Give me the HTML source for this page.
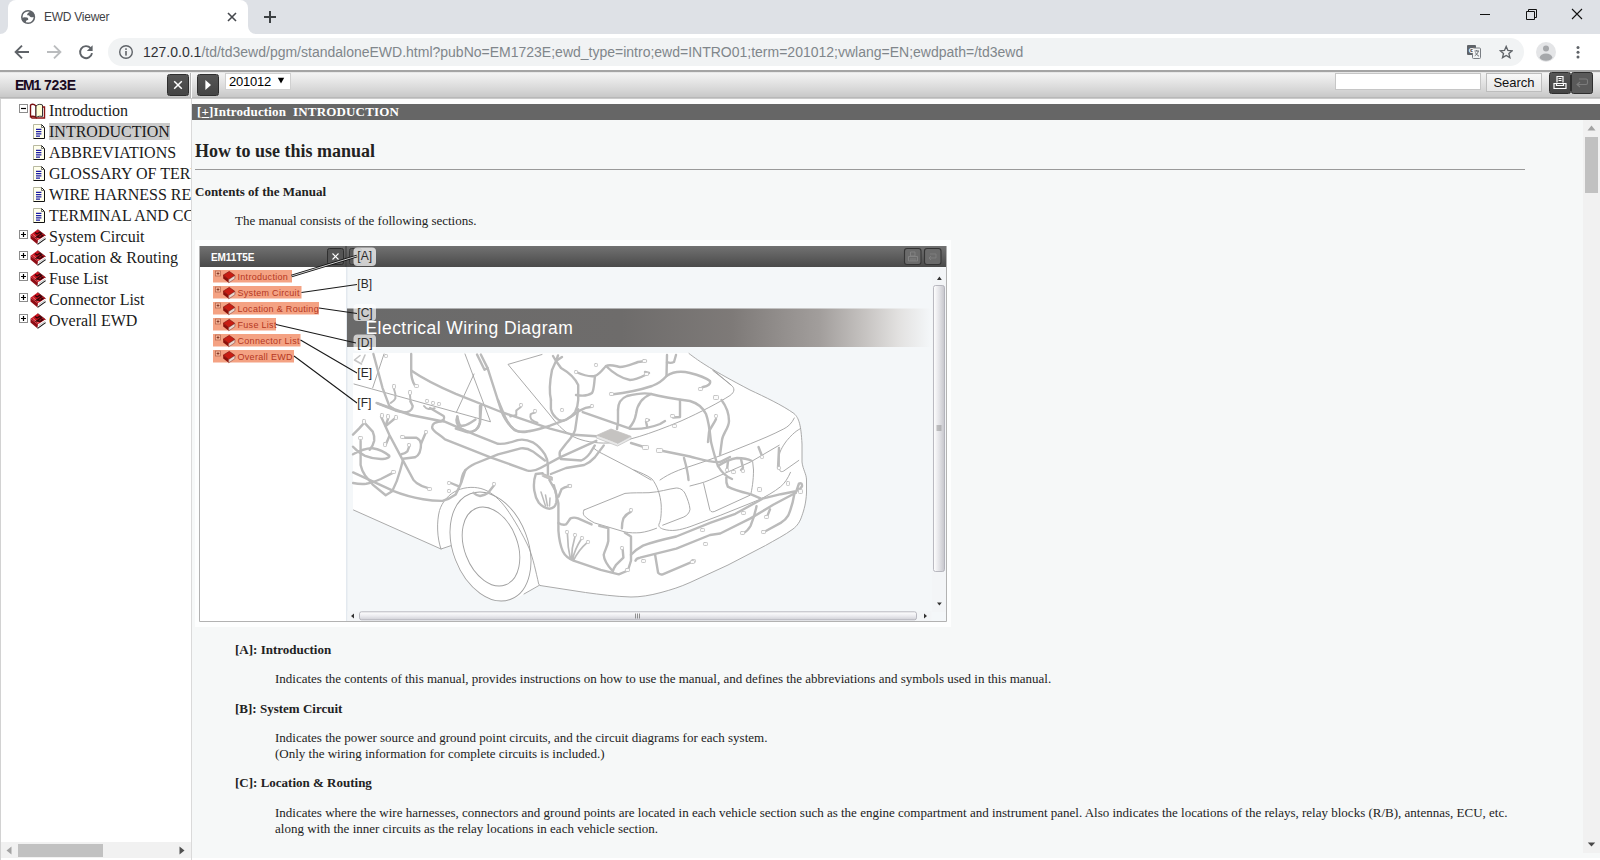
<!DOCTYPE html>
<html>
<head>
<meta charset="utf-8">
<title>EWD Viewer</title>
<style>
html,body{margin:0;padding:0;}
body{width:1600px;height:860px;overflow:hidden;position:relative;background:#fff;font-family:"Liberation Sans",sans-serif;}
.abs{position:absolute;}
/* ---------- browser chrome ---------- */
#tabstrip{left:0;top:0;width:1600px;height:34px;background:#dee1e6;}
#tab{left:8px;top:0;width:240px;height:34px;background:#fff;border-radius:8px 8px 0 0;}
#tabtitle{left:44px;top:10px;font-size:12px;color:#3f4246;white-space:nowrap;letter-spacing:-0.25px;line-height:15px;}
#navbar{left:0;top:34px;width:1600px;height:36px;background:#fff;}
#urlpill{left:108px;top:38px;width:1416px;height:28px;border-radius:14px;background:#f1f3f4;}
#url{left:143px;top:44px;font-size:14px;color:#80868b;white-space:nowrap;letter-spacing:0;}
#url b{font-weight:normal;color:#303134;}
/* ---------- ewd toolbar ---------- */
#ewdbar{left:0;top:70px;width:1600px;height:29px;background:linear-gradient(#a4a4a4 0,#a4a4a4 2px,#f4f4f4 2.6px,#e6e6e6 11px,#d6d6d6 20px,#c8c8c8 27px,#a8a8a8 28px,#ececec 29px);}
.dbtn{background:linear-gradient(#565656,#444);border:1px solid #2e2e2e;border-radius:2.5px;box-sizing:border-box;}
/* ---------- left tree ---------- */
#left{left:0;top:99px;width:191px;height:761px;background:#fff;overflow:hidden;}
.tr{position:absolute;font-family:"Liberation Serif",serif;font-size:16px;color:#1a1a1a;white-space:nowrap;line-height:21px;height:21px;}
/* ---------- content ---------- */
#content{left:192px;top:99px;width:1408px;height:761px;background:#f6f8f8;overflow:hidden;font-family:"Liberation Serif",serif;color:#222;}
#content .t{position:absolute;white-space:nowrap;font-size:13px;}
</style>
</head>
<body>
<!-- tab strip -->
<div id="tabstrip" class="abs"></div>
<div id="tab" class="abs"></div>
<svg class="abs" style="left:0;top:26px" width="8" height="8" viewBox="0 0 8 8"><path d="M8 0 V8 H0 A8 8 0 0 0 8 0Z" fill="#fff"/></svg>
<svg class="abs" style="left:248px;top:26px" width="8" height="8" viewBox="0 0 8 8"><path d="M0 0 V8 H8 A8 8 0 0 1 0 0Z" fill="#fff"/></svg>
<div id="tabtitle" class="abs">EWD Viewer</div>
<!-- nav bar -->
<div id="navbar" class="abs"></div>
<div id="urlpill" class="abs"></div>
<div id="url" class="abs"><b>127.0.0.1</b>/td/td3ewd/pgm/standaloneEWD.html?pubNo=EM1723E;ewd_type=intro;ewd=INTRO01;term=201012;vwlang=EN;ewdpath=/td3ewd</div>

<!-- favicon globe -->
<svg class="abs" style="left:20px;top:9px" width="16" height="16" viewBox="0 0 16 16"><circle cx="8.1" cy="8" r="6.3" fill="#fff" stroke="#5f6368" stroke-width="1.6"/><path d="M7.2 5.2 C7.6 4.2 8.6 3.4 10.5 2.5 L12.9 3.1 L14.3 5.2 L14.5 7.2 C14 8 13.4 8.3 12.7 8.3 C11.8 8.4 11 8.2 10.5 8 C9.8 7.6 9.4 7 9.1 6.6 C8.4 6.3 7.8 6.4 7.2 6.3 Z" fill="#5f6368"/><path d="M2.3 9.1 C3 8.5 3.7 8.3 4.4 8.3 L7.2 8.5 C7.9 8.9 8.2 9.4 8.3 10 C8.3 10.5 8.1 10.9 7.7 11.1 L6.4 11.6 C6 12.2 5.9 12.8 5.8 13.4 L4.4 14 L2.6 12.3 L1.8 10.5 Z" fill="#5f6368"/></svg>
<!-- tab close -->
<svg class="abs" style="left:226px;top:11px" width="12" height="12" viewBox="0 0 12 12"><path d="M2 2 L10 10 M10 2 L2 10" stroke="#45484d" stroke-width="1.6" fill="none"/></svg>
<!-- new tab -->
<svg class="abs" style="left:263px;top:10px" width="14" height="14" viewBox="0 0 14 14"><path d="M7 1 V13 M1 7 H13" stroke="#3c4043" stroke-width="2" fill="none"/></svg>
<!-- window controls -->
<svg class="abs" style="left:1470px;top:4px" width="120" height="22" viewBox="0 0 120 22"><path d="M10 10.5 H20" stroke="#111" stroke-width="1" fill="none"/><path d="M56.5 7.5 H64.5 V15.5 H56.5 Z M58.5 7.5 V5.5 H66.5 V13.5 H64.5" stroke="#111" stroke-width="1" fill="none"/><path d="M102 5 L112 15 M112 5 L102 15" stroke="#111" stroke-width="1.1" fill="none"/></svg>
<!-- back -->
<svg class="abs" style="left:14px;top:44px" width="16" height="16" viewBox="0 0 16 16"><path d="M15 8 H2.5 M8 1.6 L1.6 8 L8 14.4" stroke="#5f6368" stroke-width="1.9" fill="none"/></svg>
<!-- forward -->
<svg class="abs" style="left:46px;top:44px" width="16" height="16" viewBox="0 0 16 16"><path d="M1 8 H13.5 M8 1.6 L14.4 8 L8 14.4" stroke="#babcbe" stroke-width="1.9" fill="none"/></svg>
<!-- reload -->
<svg class="abs" style="left:78px;top:44px" width="16" height="16" viewBox="0 0 16 16"><path d="M12.6 4.2 A6 6 0 1 0 14 9.2" stroke="#5f6368" stroke-width="1.9" fill="none"/><path d="M14.6 1.2 V7 H8.8 Z" fill="#5f6368"/></svg>
<!-- info -->
<svg class="abs" style="left:118px;top:44px" width="16" height="16" viewBox="0 0 16 16"><circle cx="8" cy="8" r="6.3" stroke="#5f6368" stroke-width="1.4" fill="none"/><rect x="7.2" y="7" width="1.6" height="4.6" fill="#5f6368"/><rect x="7.2" y="4.3" width="1.6" height="1.6" fill="#5f6368"/></svg>
<!-- translate -->
<svg class="abs" style="left:1466px;top:44px" width="16" height="16" viewBox="0 0 16 16"><rect x="1" y="1" width="9" height="10" rx="1" fill="#5f6368"/><rect x="6.5" y="4" width="8" height="10.5" rx="1" fill="#f1f3f4" stroke="#7a7e83" stroke-width="1"/><text x="5.4" y="9" font-family="Liberation Sans" font-size="7" font-weight="bold" fill="#fff" text-anchor="middle">G</text><path d="M8.5 7 H13 M10.7 6 V7 M12.3 7 C11.8 9.5 10 11 8.8 11.8 M9.5 8.5 C10 10 11.5 11.5 13 12.2" stroke="#5f6368" stroke-width="0.9" fill="none"/></svg>
<!-- star -->
<svg class="abs" style="left:1498.8px;top:44.6px" width="14.4" height="14.4" viewBox="0 0 16 16"><path d="M8 1.6 L9.9 6 L14.6 6.4 L11 9.5 L12.1 14.1 L8 11.6 L3.9 14.1 L5 9.5 L1.4 6.4 L6.1 6 Z" stroke="#5f6368" stroke-width="1.5" fill="none" stroke-linejoin="miter"/></svg>
<!-- avatar -->
<svg class="abs" style="left:1536px;top:42px" width="20" height="20" viewBox="0 0 20 20"><defs><clipPath id="avc"><circle cx="10" cy="10" r="10"/></clipPath></defs><circle cx="10" cy="10" r="10" fill="#e4e5e7"/><g clip-path="url(#avc)"><circle cx="10" cy="6.6" r="3" fill="#a6a8ab"/><ellipse cx="10" cy="15.2" rx="6.2" ry="3.6" fill="#a6a8ab"/></g></svg>
<!-- menu -->
<svg class="abs" style="left:1574px;top:44px" width="8" height="16" viewBox="0 0 8 16"><circle cx="4" cy="3.4" r="1.5" fill="#5f6368"/><circle cx="4" cy="8.2" r="1.5" fill="#5f6368"/><circle cx="4" cy="13" r="1.5" fill="#5f6368"/></svg>
<!-- ewd toolbar -->
<div id="ewdbar" class="abs"></div>

<div class="abs" style="left:15px;top:77px;font-size:14px;font-weight:bold;color:#1a0a1e;white-space:nowrap;line-height:16px"><span style="letter-spacing:-1.3px">EM1</span><span style="margin-left:4.2px;letter-spacing:-0.25px">723E</span></div>
<div class="abs dbtn" style="left:167px;top:74px;width:22px;height:22px"></div>
<svg class="abs" style="left:173px;top:80px" width="10" height="10" viewBox="0 0 10 10"><path d="M1.2 1.2 L8.8 8.8 M8.8 1.2 L1.2 8.8" stroke="#fff" stroke-width="1.5" fill="none"/></svg>
<div class="abs" style="left:190px;top:73px;width:1px;height:25px;background:#b4b4b4"></div>
<div class="abs" style="left:191px;top:73px;width:1px;height:25px;background:#fbfbfb"></div>
<div class="abs dbtn" style="left:197px;top:74px;width:22px;height:22px"></div>
<svg class="abs" style="left:204px;top:79px" width="8" height="12" viewBox="0 0 8 12"><path d="M1.4 1 L7 6 L1.4 11 Z" fill="#fff"/></svg>
<div class="abs" style="left:225px;top:73px;width:66px;height:17px;background:#fff;border:1px solid #d0d0d0;box-sizing:border-box"></div>
<div class="abs" style="left:229px;top:74px;font-size:13px;color:#000;letter-spacing:-0.25px;line-height:15px;white-space:nowrap">201012</div>
<svg class="abs" style="left:277px;top:77px" width="8" height="7" viewBox="0 0 8 7"><path d="M0.8 0.8 H7.2 L4 6.4 Z" fill="#000"/></svg>
<div class="abs" style="left:1335px;top:73px;width:146px;height:17px;background:#fff;border:1px solid #c6c6c6;box-sizing:border-box"></div>
<div class="abs" style="left:1486px;top:73px;width:56px;height:19px;background:linear-gradient(#f8f8f8,#e6e6e6);border:1px solid #bdbdbd;box-sizing:border-box;font-size:13px;color:#111;text-align:center;line-height:17px">Search</div>
<div class="abs dbtn" style="left:1549px;top:72px;width:22px;height:22px"></div>
<div class="abs dbtn" style="left:1571px;top:72px;width:22px;height:22px;background:#5a5a5a"></div>
<svg class="abs" style="left:1552px;top:75px" width="16" height="16" viewBox="0 0 16 16"><path d="M5 7.5 V1.5 H11 V7.5 M2 8.5 H14 V13.5 H2 Z M4.5 8.5 V10.5 H11.5 V8.5" stroke="#fff" stroke-width="1.2" fill="none"/><path d="M6.5 3.5 H9.5 M6.5 5.5 H9.5" stroke="#fff" stroke-width="1"/></svg>
<svg class="abs" style="left:1574px;top:75px" width="16" height="16" viewBox="0 0 16 16"><path d="M5 4 H12 Q13.5 4 13.5 5.5 V8 Q13.5 9.5 12 9.5 H3 M6 7 L3 9.5 L6 12" stroke="#7c7c7c" stroke-width="1.1" fill="none"/></svg>
<!-- left -->
<svg width="0" height="0" style="position:absolute"><defs>
<g id="i-minus"><rect x="0.5" y="0.5" width="8" height="8" fill="#fff" stroke="#8c8c8c"/><path d="M2 4.5 H7" stroke="#000" stroke-width="1.2"/></g>
<g id="i-plus"><rect x="0.5" y="0.5" width="8" height="8" fill="#fff" stroke="#8c8c8c"/><path d="M2 4.5 H7 M4.5 2 V7" stroke="#000" stroke-width="1.2"/></g>
<g id="i-doc"><path d="M0.5 0.5 H8.5 L11.5 3.5 V14.5 H0.5 Z" fill="#ffffec"/><path d="M0.5 14.5 V0.5 H8.5" fill="none" stroke="#b9b9a0" stroke-width="1"/><path d="M8.5 0.5 L11.5 3.5 V14.5 H0.5" fill="none" stroke="#111" stroke-width="1"/><path d="M8.5 0.5 V3.5 H11.5" fill="none" stroke="#555" stroke-width="0.8"/><path d="M3 5.3 H8.4 M3 7.6 H8.4 M3 9.9 H8.4 M3 12.2 H7" stroke="#1c1ca4" stroke-width="1.25"/></g>
<g id="i-open"><path d="M1.5 2 C3 1 5 1 7 3 V14.5 C5 13 3 13 1.5 13.5 Z" fill="#fff" stroke="#7a1010" stroke-width="1.4"/><path d="M7 3 C9 1 11.5 1 13.5 2 V13.5 C11.5 13 9 13 7 14.5 Z" fill="#ffffd8" stroke="#333" stroke-width="1"/><path d="M13.5 4 H15.5 V15 H3 L1.5 13.5" fill="none" stroke="#8a1414" stroke-width="1.4"/></g>
<g id="i-book"><path d="M0.5 5.7 L7.6 0.4 L15.6 6.6 L8 11.6 Z" fill="#c8121e"/><path d="M0.5 5.7 L8 11.6 L7.6 15.4 L0.5 9.4 Z" fill="#8e0c14"/><path d="M8 11.6 L15.6 6.6 V9.6 L7.6 15.4 Z" fill="#fff"/><path d="M7.6 15.4 L15.6 9.6" stroke="#111" stroke-width="1.1"/><path d="M8.6 12.6 L15.3 8.2" stroke="#999" stroke-width="0.6"/><path d="M2.6 5.2 L9.2 10.6" stroke="#f0b0b0" stroke-width="0.7"/><path d="M5.2 3.6 L7 5 L9.6 3.4 L11.4 4.8 L6.6 8 L10.4 8.4 L12.8 6.8 L11 5.6" fill="none" stroke="#30060a" stroke-width="1.3"/><path d="M7.6 0.4 L15.6 6.6" stroke="#5a060c" stroke-width="0.7"/></g>
</defs></svg><div id="left" class="abs"><div class="abs" style="left:0;top:1px" id="treewrap"><svg class="abs" style="left:19px;top:4px" width="9" height="9" viewBox="0 0 9 9"><use href="#i-minus"/></svg><svg class="abs" style="left:29px;top:3px" width="17" height="16" viewBox="0 0 17 16"><use href="#i-open"/></svg><div class="tr" style="left:49px;top:0px">Introduction</div>
<svg class="abs" style="left:33px;top:24px" width="12" height="15" viewBox="0 0 12 15"><use href="#i-doc"/></svg><div class="abs" style="left:49px;top:24px;width:121px;height:17px;margin-top:-1px;background:#cbcbcb"></div><div class="tr" style="left:49px;top:21px">INTRODUCTION</div>
<svg class="abs" style="left:33px;top:45px" width="12" height="15" viewBox="0 0 12 15"><use href="#i-doc"/></svg><div class="tr" style="left:49px;top:42px">ABBREVIATIONS</div>
<svg class="abs" style="left:33px;top:66px" width="12" height="15" viewBox="0 0 12 15"><use href="#i-doc"/></svg><div class="tr" style="left:49px;top:63px">GLOSSARY OF TERMS AND SYMBOLS</div>
<svg class="abs" style="left:33px;top:87px" width="12" height="15" viewBox="0 0 12 15"><use href="#i-doc"/></svg><div class="tr" style="left:49px;top:84px">WIRE HARNESS REPAIR</div>
<svg class="abs" style="left:33px;top:108px" width="12" height="15" viewBox="0 0 12 15"><use href="#i-doc"/></svg><div class="tr" style="left:49px;top:105px">TERMINAL AND CONNECTOR REPAIR</div>
<svg class="abs" style="left:19px;top:130px" width="9" height="9" viewBox="0 0 9 9"><use href="#i-plus"/></svg><svg class="abs" style="left:30px;top:129px" width="16" height="16" viewBox="0 0 16 16"><use href="#i-book"/></svg><div class="tr" style="left:49px;top:126px">System Circuit</div>
<svg class="abs" style="left:19px;top:151px" width="9" height="9" viewBox="0 0 9 9"><use href="#i-plus"/></svg><svg class="abs" style="left:30px;top:150px" width="16" height="16" viewBox="0 0 16 16"><use href="#i-book"/></svg><div class="tr" style="left:49px;top:147px">Location &amp; Routing</div>
<svg class="abs" style="left:19px;top:172px" width="9" height="9" viewBox="0 0 9 9"><use href="#i-plus"/></svg><svg class="abs" style="left:30px;top:171px" width="16" height="16" viewBox="0 0 16 16"><use href="#i-book"/></svg><div class="tr" style="left:49px;top:168px">Fuse List</div>
<svg class="abs" style="left:19px;top:193px" width="9" height="9" viewBox="0 0 9 9"><use href="#i-plus"/></svg><svg class="abs" style="left:30px;top:192px" width="16" height="16" viewBox="0 0 16 16"><use href="#i-book"/></svg><div class="tr" style="left:49px;top:189px">Connector List</div>
<svg class="abs" style="left:19px;top:214px" width="9" height="9" viewBox="0 0 9 9"><use href="#i-plus"/></svg><svg class="abs" style="left:30px;top:213px" width="16" height="16" viewBox="0 0 16 16"><use href="#i-book"/></svg><div class="tr" style="left:49px;top:210px">Overall EWD</div>
</div><div class="abs" style="left:0;top:743px;width:191px;height:16px;background:#f1f1f1"></div>
<div class="abs" style="left:18px;top:745px;width:85px;height:13px;background:#c1c1c1"></div>
<svg class="abs" style="left:6px;top:747px" width="6" height="9" viewBox="0 0 6 9"><path d="M5.5 0.5 L0.5 4.5 L5.5 8.5 Z" fill="#a3a3a3"/></svg>
<svg class="abs" style="left:179px;top:747px" width="6" height="9" viewBox="0 0 6 9"><path d="M0.5 0.5 L5.5 4.5 L0.5 8.5 Z" fill="#505050"/></svg></div>
<div class="abs" style="left:0;top:99px;width:1px;height:761px;background:#d2d2d2"></div>
<div class="abs" style="left:191px;top:99px;width:1px;height:761px;background:#dadada"></div>
<!-- content -->
<div id="content" class="abs">
<div class="abs" style="left:0;top:0;width:1408px;height:5px;background:#fcfcfc"></div>
<div class="abs" style="left:0;top:5px;width:1408px;height:16px;background:#666"></div>
<div class="t" style="left:5px;top:5px;color:#fff;font-weight:bold;line-height:16px;letter-spacing:0.17px">[<u>+</u>]Introduction&nbsp; INTRODUCTION</div>
<div class="t" style="left:3px;top:42px;font-size:18px;font-weight:bold;line-height:21px">How to use this manual</div>
<div class="abs" style="left:3px;top:70px;width:1330px;height:1px;background:#9a9a9a"></div>
<div class="t" style="left:3px;top:85px;font-weight:bold;line-height:15px">Contents of the Manual</div>
<div class="t" style="left:43px;top:114px;line-height:15px">The manual consists of the following sections.</div>
<div class="t" style="left:43px;top:543px;font-weight:bold;line-height:15px">[A]: Introduction</div>
<div class="t" style="left:83px;top:572px;line-height:15px">Indicates the contents of this manual, provides instructions on how to use the manual, and defines the abbreviations and symbols used in this manual.</div>
<div class="t" style="left:43px;top:602px;font-weight:bold;line-height:15px">[B]: System Circuit</div>
<div class="t" style="left:83px;top:631px;line-height:15px">Indicates the power source and ground point circuits, and the circuit diagrams for each system.</div>
<div class="t" style="left:83px;top:647px;line-height:15px">(Only the wiring information for complete circuits is included.)</div>
<div class="t" style="left:43px;top:676px;font-weight:bold;line-height:15px">[C]: Location &amp; Routing</div>
<div class="t" style="left:83px;top:706px;line-height:15px">Indicates where the wire harnesses, connectors and ground points are located in each vehicle section such as the engine compartment and instrument panel. Also indicates the locations of the relays, relay blocks (R/B), antennas, ECU, etc.</div>
<div class="t" style="left:83px;top:722px;line-height:15px">along with the inner circuits as the relay locations in each vehicle section.</div>
<div class="abs" style="left:1391px;top:21px;width:17px;height:733px;background:#f1f1f1"></div>
<div class="abs" style="left:1393px;top:38px;width:13px;height:56px;background:#c1c1c1"></div>
<svg class="abs" style="left:1395px;top:26px" width="9" height="6" viewBox="0 0 9 6"><path d="M0.5 5.5 L4.5 0.5 L8.5 5.5 Z" fill="#a3a3a3"/></svg>
<svg class="abs" style="left:1395px;top:742.5px" width="9" height="6" viewBox="0 0 9 6"><path d="M0.8 0.4 L4.5 4.6 L8.2 0.4 Z" fill="#484848"/></svg>
<!-- IMG -->
<div class="abs" style="left:3px;top:141px;width:756px;height:387px;background:#fdfefe"></div>
<svg class="abs" style="left:7px;top:146px" width="749" height="378" viewBox="199 245 749 378" font-family="Liberation Sans, sans-serif">
<defs>
<linearGradient id="gtb" x1="0" y1="0" x2="0" y2="1"><stop offset="0" stop-color="#727272"/><stop offset="1" stop-color="#4a4a4a"/></linearGradient>
<linearGradient id="gban" x1="0" y1="0" x2="1" y2="0"><stop offset="0" stop-color="#6a6a6a"/><stop offset="0.47" stop-color="#6e6c6b"/><stop offset="0.66" stop-color="#7e7a78"/><stop offset="0.81" stop-color="#a29e9c"/><stop offset="0.887" stop-color="#c6c3c1"/><stop offset="0.947" stop-color="#e3e2e1"/><stop offset="1" stop-color="#f4f7f9"/></linearGradient>
<linearGradient id="gvs" x1="0" y1="0" x2="1" y2="0"><stop offset="0" stop-color="#ffffff"/><stop offset="0.5" stop-color="#e4e4e8"/><stop offset="1" stop-color="#c6c6cc"/></linearGradient>
<linearGradient id="ghs" x1="0" y1="0" x2="0" y2="1"><stop offset="0" stop-color="#ffffff"/><stop offset="0.5" stop-color="#ececf0"/><stop offset="1" stop-color="#d0d0d6"/></linearGradient>
<g id="mb" transform="scale(1.35)"><path d="M0.5 3.6 L5 0.8 L9.2 3.8 L4.6 6.8 Z" fill="#c81e14" stroke="#7a0c08" stroke-width="0.5"/><path d="M0.5 3.6 L4.6 6.8 V9.3 L0.5 6 Z" fill="#8a100a"/><path d="M4.6 6.8 L9.2 3.8 V6.2 L4.6 9.3 Z" fill="#e8d8d0" stroke="#8a3a30" stroke-width="0.4"/></g>
<g id="mp"><rect x="0.5" y="0.5" width="5" height="5" fill="#f7b79c" stroke="#b86a50" stroke-width="0.8"/><path d="M1.6 3 H4.4 M3 1.6 V4.4" stroke="#7a2a18" stroke-width="0.8"/></g>
</defs>
<!-- frame -->
<rect x="199" y="246" width="748" height="376" fill="#f4f7f9"/><path d="M199.5 246 V621.5 H946.5 V246" fill="none" stroke="#b2b2b2"/>
<rect x="200" y="246" width="746" height="21" fill="url(#gtb)"/>
<rect x="200" y="267" width="146" height="354" fill="#fff"/>
<rect x="346" y="267" width="1.5" height="354" fill="#e3e9ef"/>
<text x="211" y="260.5" font-size="10" font-weight="bold" fill="#fff" letter-spacing="-0.1">EM11T5E</text>
<rect x="327.5" y="248.5" width="16" height="16" rx="2" fill="#555" stroke="#2f2f2f"/>
<path d="M332.5 253.5 L338.5 259.5 M338.5 253.5 L332.5 259.5" stroke="#fff" stroke-width="1.1"/>
<rect x="345.5" y="246" width="1" height="21" fill="#3c3c3c"/>
<rect x="349.5" y="248.5" width="12" height="16" rx="2" fill="#5a5a5a" stroke="#3a3a3a"/>
<rect x="904.5" y="248.5" width="16.5" height="16" rx="2.5" fill="#6b6b6b" stroke="#353535" stroke-width="1.1"/>
<rect x="924.5" y="248.5" width="16.5" height="16" rx="2.5" fill="#6b6b6b" stroke="#353535" stroke-width="1.1"/>
<path d="M910.5 252 h4.5 v4 h-4.5z M908.5 256.5 h9 v4.5 h-9z M911 258 v3 M913 258 v3 M915 258 v3" fill="none" stroke="#848484" stroke-width="0.9"/>
<path d="M930 254 h6 v4 h-7 m2 -2 l-2 2 l2 2" fill="none" stroke="#808080" stroke-width="0.9"/>
<!-- banner -->
<rect x="347" y="308.5" width="584" height="38.5" fill="url(#gban)"/>
<text x="365.5" y="333.5" font-size="17.5" fill="#fff" letter-spacing="0.45">Electrical Wiring Diagram</text>
<!--CARS--><g id="car" fill="none" stroke-linecap="round" stroke-linejoin="round">
<!-- white body -->
<path d="M353 353 H689 C700 362 712 370 750 390 C765 397 782 405 794 413.5 C799 418 801 425 802 444 V462 C803 470 806.5 474 806.5 480 V493 C806 503 804 510 802 515.5 C800 522 797 526 793 529 C785 535 775 540 765.5 545.5 L728 565 L690 582.5 C680 587 672 589.5 661 592.5 C650 595.5 640 597 631 597 C615 596.5 600 594.5 585.5 592.5 L540 585.5 L524 594 C510 603 490 603 478 592 C462 578 452 560 450.8 545.7 L441 549 L353 510 Z" fill="#fff" stroke="none"/>
<!-- thin outlines -->
<g stroke="#a0a0a0" stroke-width="0.9">
<path d="M689 353.5 C700 362 712 370 750 390 C765 397 782 405 794 413.5 C799 418 801 425 802 444 V462 C803 470 806.5 474 806.5 480 V493 C806 503 804 510 802 515.5 C800 522 797 526 793 529 C785 535 775 540 765.5 545.5 L728 565 L690 582.5 C680 587 672 589.5 661 592.5 C650 595.5 640 597 631 597 C615 596.5 600 594.5 585.5 592.5 L540 585.5"/>
<path d="M353.5 510 L441 549 L450.8 545.7"/>
<path d="M441 549 C437 538 436.5 522 439.5 510.5 C442 502 449 494 457 490.5 C466 486.5 476 486.5 484 489.5 C492 492.5 500 500 506 508 C514 519 523 535 529 548 C533 558 536 572 538.7 584 L540 585.5"/>
<ellipse cx="490.5" cy="546.5" rx="37.5" ry="56.5" transform="rotate(-21 490.5 546.5)"/>
<ellipse cx="491" cy="546.5" rx="26.5" ry="41" transform="rotate(-21 491 546.5)"/>
<path d="M524 594 L539 585.5"/>
<path d="M354 384 L490.5 421.8 L465 354"/>
<path d="M456.5 412 L474 374"/>
<path d="M372.7 387.8 L384 354"/>
<path d="M542 354.5 L508 364.4 L550 415 C556 423 563 431 573 436.5 C583 441.5 596 443.5 608 443 C625 442 650 434 681 421 C700 412.5 720 402 730 395.5 C735 392 735 388 731 385 L712.7 370.4"/>
<path d="M794.3 418 C792 423 788 427 783.5 429 C772 435 762 439 750.5 443.7 C730 452 710 460 690 466.4 C680 469.5 670 473 660 480"/>
<path d="M800.4 428.6 C794 432 790 437 786.7 440.7 C782 447 779.5 452 779.2 456 V469 C780 472 782 472 783.7 471 L798.8 460.4"/>
<path d="M779.2 445.2 L750.5 462 L709.7 480 C703 483 697 484 690 486"/>
<path d="M752.7 462 L753.5 470 C753.5 480 752 490 750.5 495 L714.2 511.6 C711.5 512.5 710 511 709.7 509.3 L703.6 483.6"/>
<path d="M790.5 472.3 C788 478 785 483 780.7 486.6 C774 492 766 496.5 758 500.2 L720.2 515.4 L690 526.7 C680 530 672 532 662.7 529 C659 527.5 658.5 526 659 524 C661 521 661.5 512 661.2 505 C660.5 495 657 485 652 479 C647 475 640 472.5 634 470"/>
<path d="M584 510 L625 493.4 C633 492.5 640 493 649 492.7 C660 492 668 489 676.3 488 C681 488 684 491 685.4 494.2 C687.5 499 689.5 504 690 509.3 C689.5 513 687 515.5 683.8 517 L662.7 525.2"/>
<path d="M584 510 C583 512 583 514 584 515.4 C587 519 591 521 594.7 523 L625 532 C630 533 635 533 640 532.7 C646 532 652 530 656.6 528.2"/>
<path d="M594 448.4 C597 451 600 452.5 603.8 454.4 L630 468 L651 480"/>
<path d="M713.7 370.4 L730.8 384.8"/>
</g>
<!-- harness (thick) -->
<g stroke="#bbbbbb" stroke-width="2.4">
<path d="M411.2 354 V369.7 C411 376 412 381 415 385.5"/>
<path d="M411.2 370.4 C425 380 440 387 455.8 393.8 L501.2 412 L550 428.6 L573.6 434.8 L596.3 436.3"/>
<path d="M477 354.5 L484.5 369.7 L487.6 368.1 L480.8 354.5"/>
<path d="M487.6 368.1 L501.2 410.5 C504 418 508 424 513.3 428.6 C517 431.5 521 432 525.4 431.6 C535 431 542 428 550 425.6 L566 419.7 C571 417 576 413.5 579.7 410.6 C584 408 588 407 591.8 406.8"/>
<path d="M373.4 354 L382.5 387.8 L389.3 405.9 L393.8 409"/>
<path d="M378 403.7 L395.4 410.5 C400 412 404 412.5 407.4 412 C411 411 412.5 408.5 412.7 406 L410.5 401.4"/>
<path d="M376.5 402.9 L410.5 415 L440.7 421 C444 420.5 445 418 443.6 416 L430 408"/>
<path d="M443.6 421.2 C436 421 431 424 432.4 428.5 C434 432 439 434 445 439.3 L490.5 457.4 L526.7 470.3 C531 471.5 536 470.5 540.4 468 L560 457.4 L596.3 440.8"/>
<path d="M443.6 421.2 L475.4 434.8 L498 443.8 C505 444.5 512 442 517.7 440.1 C523 439 528 440 532.8 442.3 C538 445.5 542 450 544.9 454.4 C547 458 547.9 461 547.9 465 V474"/>
<path d="M461 483.1 C461.5 478 462.5 474 464.8 471 C467.5 467.5 471 465.5 475.4 463.5 L498 454.4 L520.7 448.4 C525 447.8 529 449 532.8 451.4 L544.9 460.5"/>
<path d="M481.4 404.5 L479.9 422.7 C479 427 476 430.5 472.3 431.7 C468 432.5 464 431 460.2 428 C456.5 424.5 456 420 457.3 416.5"/>
<path d="M457.3 416.5 C458 420 459 424 460.4 425.6 C464 426.5 468 424.5 470.9 422.6 L475.5 419.5"/>
<path d="M498 400 L505.6 418.1 C508 423 511 427.5 514.7 430.2 C518 432 522 432.3 526.7 431.7"/>
<path d="M550.9 400 V409.1 C552 414 555 417.5 558.5 419.7 C561 421 563.5 421 566 419.7 C570 417.5 573 415 575.1 412.1 C577 408.5 578 404 578.2 400 L578.2 385 C575 378 568 372 561 368 L556 361"/>
<path d="M551 400 C549 392 550 380 552 370 L556 361 L553 356 M556 361 L558 355.5 M556 361 L562 357"/>
<path d="M578.2 409.1 L575.1 430.2 C573 436 569.5 440 566 443.8 L560 451.4 C559 454 560 457 560.8 459 L581.2 460.5 C585 459 588 456 590.2 452.9 L594.8 445.4"/>
<path d="M582.7 412.1 L630 428.7"/>
<path d="M550.9 474 L566 468 L584.2 465 C589 463 592 460.5 594.8 457.4 L603.8 445.4"/>
<path d="M542.6 473.3 L535.8 474 C534 479 533.5 485 534.3 490.7 C535 495.5 536.5 499.5 538.8 502.8 C542 506.5 545.5 508.5 549.4 508.8 C553 508.5 555.5 506 556.2 502.8 C557 498.5 556.5 494.5 555.5 490.7 L549.4 480"/>
<path d="M541 492 L545.5 506 M545.5 495 L547.5 506 M550 498 L549.5 506" stroke-width="1.5"/>
<path d="M553.8 485.1 L558.4 503.3 V530.5 C559 539 560.5 546 562.9 551.6 C565 556 569 558.8 573.5 560.7 L600.7 569.8 L618.8 574.3 L627.9 570.5"/>
<path d="M558.5 496.7 L561.5 489.2 C564 487 566.5 486.5 569 486.2"/>
<path d="M558.4 522.9 C561 524.5 564 525 566 524.4 C568 522.5 569 520 570.5 518.4 C573 517.3 575.5 517.5 578 518.4 L591.6 524.4"/>
<path d="M599.2 525.9 L608.3 528.2 V541 C607.5 546 605 550 603.7 554.7 C604 561 608 566 612.8 571.3 C613.5 569 614.5 567 615.8 565.2 L623.4 557.7 L622.6 548.6"/>
<path d="M621.9 528.2 C621.9 524.5 622.5 521 623.4 518.4 C625.5 515 628 513 631 511.6"/>
<path d="M624.9 532.7 L631 536.5 V560.7 L627.9 570.5"/>
<path d="M570.5 559.2 C568.5 551 567.5 542 567.4 533.5 M571.5 559.5 C571.5 551 573 543 575 536.5 M572.5 560 C574 552 577.5 545 581 539.5 M573.5 560.5 C577 553 582 547 587.1 542.6" stroke-width="1.7"/>
<path d="M631 554.7 C634.5 551 638.5 548 643 545.6 C654 541.5 665 539 676.3 536.5 L710 522.9 L735.4 513.8 L762.6 498.7 L780.7 494.2 L795.8 491.2 C799 490 801 488.5 801.9 486.6 C802.5 484 801 482.5 799 483.5 L795.8 492.7"/>
<path d="M635.5 560.7 C636 559 638 558 640 557.7 L676.3 548.6 L710 535 L720.2 533.5 L750.5 518.4 L773.2 504.8 L795.8 492.7"/>
<path d="M655.1 554.7 L658.1 572.8 C659.5 574.5 661 574.8 662.7 574.3 L691.4 562.2"/>
<path d="M756.5 506.3 C755 514 753 520 750.5 526 C748.5 529.5 746 532 742.9 533.5"/>
<path d="M770 509.3 L767 516.9"/>
<path d="M794.3 494.2 C793 502 791 509 788.3 515.4 C786.5 518.5 784 521 780.7 522.9 L764 532"/>
<path d="M726.3 477.6 C726 481 726.5 484 727.8 486.6 C734 490 742 492 750.5 494.2 L761 498.7"/>
<path d="M353.1 472.4 L369.4 479.8 L393.8 491.2 C403 495 413 497.5 423.1 499.3 C430 500.5 436 501 442.6 500.9 C447.5 499.5 452 497 455.7 494.4 L458.9 487.9 C461 484 462.5 479 463.8 474.9 L465.4 470"/>
<path d="M353.1 483 C358 484 362 484.2 366.2 483.8 C371.5 482.8 376 481 380.8 479 L393.8 472.4"/>
<path d="M353 446.7 C357 451 361 454 365.1 455.8 C372 458.5 379 459.5 384.8 458.8 C388 458 390 457 389.3 455.8 C384 451.5 378.5 449.3 372.7 448.3 C366 448 359 451 353 454.3"/>
<path d="M360.6 440.7 V464.9 C361.5 469 363 472.5 365.1 475.5 L372.7 484.6 L385.7 495.2 L392.2 491.2 C396 484 398.5 477 400.3 470 L402.9 460.4"/>
<path d="M353 434.7 L359 428.6 L364.4 422.6 L372.7 431.6 C374 434.5 374.5 437.5 374.2 440.7 C373.5 444 372 447 369.7 449.8"/>
<path d="M381 416.5 L389.3 434.7 L402.9 460.4 L413.5 480 L416.6 483 C420 485.5 424.5 487.5 429.6 488.7"/>
<path d="M388 419 L385.5 425.6 M395.4 418 L386.3 425.6 M385.5 445.2 L389.3 436.2"/>
<path d="M402.9 437.7 H416.5 C419 439 420.5 441 421 443.7 C421.2 447 420.5 450 419.5 452.8 C418.5 455 417 456.5 415 457.3 L402.9 458.8"/>
<path d="M409.7 445.2 L407.4 451.3 C405.5 453 403.5 454 401.4 454.3"/>
<path d="M425.6 433.1 L421 443.7"/>
<path d="M450.8 483 L458.9 486.3 M473.6 492.8 C475.5 494.5 478 495.7 480.1 496 C483 495.5 486 494.5 488.2 492.8 L493.9 485.5"/>
<path d="M480 405.9 V422.6 C479 426 477.5 428.5 475.5 430.1 C473 431.7 470.5 432.3 467.9 432.4 L455.8 428.6"/>
<!-- upper middle -->
<path d="M576 372 C583 375 590 377 595 376 C600 374 603 369 606 366 C610 364 615 366 620 367 C626 367 632 364 638 362 L646 361"/>
<path d="M595 376 C594 384 594 390 592 393 C588 396 582 396 576 395"/>
<path d="M606 366 C612 372 620 378 630 380 C637 380 643 376 649 373 L645 372"/>
<path d="M611.5 394.5 C625 393 640 390 652 386 C660 383 664 379 666.5 376 L667 355"/>
<path d="M667 362 C669 363 672 363 674 362 L676 355"/>
<path d="M666.5 376 C674 371 682 371 690 373 C698 375 706 378 710 381 C711 384 708 386 703 387 L700 389"/>
<path d="M618 410 C618 402 622 398 627 396 C635 394 643 392 651 394 C662 397 675 399 690 401 C697 403 703 408 706 414 C709 422 710 432 711 442"/>
<path d="M651 394 C641 398 637 406 636 414 C635 420 632 425 629 428"/>
<path d="M618 410 V422 L617 429"/>
<path d="M680 400 V417 L673 417.5"/>
<path d="M630 428.7 C640 429.5 650 428 660 424 L665 421 M647 426 L646 421.5 L649 420"/>
<path d="M631 443 L644 447"/>
<path d="M663 451 L690 456.5 C700 459 712 463 720 462 L730 457"/>
<path d="M684 458 C686 465 688 472 688.5 480"/>
<path d="M716 419 C714 424 710 428 709 432 L708 442"/>
<path d="M721.5 400 C726 406 729 414 729 421 C729 428 723 433 722 440 L720 455"/>
<path d="M711 442 C713 450 715 458 718 466 C722 473 727 477 732 479"/>
<path d="M718 466 C724 462 730 459 737 458 C743 458 748 459 752 461"/>
<path d="M728 461 L727 470 M741 459 L743 468 L741 470 M758.5 447 L762 456"/>
<path d="M779 448 L778 468"/>
</g>
<path d="M360 355.5 L354.5 360 L361.5 364 M365 355 L362 362" stroke="#c4c4c4" stroke-width="1.6" fill="none"/>
<path d="M394 389 C395.5 393 395.8 396 395.4 398.4 C394.5 400.5 392.5 402 390.8 402.9" stroke="#bbbbbb" stroke-width="2" fill="none"/>
<path d="M410 395 L410.5 401.4 M424 406 C425.5 408 427 409 428.6 409 C431 409.3 433 409 434.7 408.2" stroke="#bbbbbb" stroke-width="2" fill="none"/>
<path d="M520.8 407 L516.3 410.5 V415 L510.2 416.5 M535.2 412.5 C533 413 531.5 413.5 530.6 414.2 C530 416 530.5 418 531.4 419.5 C533 421 535 422 537.5 422.6" stroke="#bbbbbb" stroke-width="2" fill="none"/>
<!-- ECU -->
<path d="M596.3 435.5 L611 429 L631 436.3 L617.5 443.5 Z" fill="#c5c3c1" stroke="#c5c3c1" stroke-width="0.8"/>
<path d="M617.5 443.5 L631 436.3 V439 L617.5 446 L596.3 438 V435.5" fill="#e8e8e8" stroke="#bdbdbd" stroke-width="0.7"/>
<path d="M542.6 473.3 L552.4 477.1 V480.5 L542.6 476.5 Z" fill="#c5c3c1" stroke="#b5b5b5" stroke-width="0.7"/>
<!-- connectors -->
<g fill="#fbfbfb" stroke="#c2c2c2" stroke-width="0.9">
<rect x="414.5" y="384.5" width="4.0" height="3.0" rx="0.8"/><rect x="392.5" y="384.5" width="3.0" height="4.0" rx="0.8"/><rect x="408.5" y="390.5" width="3.0" height="4.0" rx="0.8"/>
<rect x="425.5" y="399.5" width="3.0" height="3.0" rx="0.8"/><rect x="431.5" y="401.5" width="3.0" height="3.0" rx="0.8"/><rect x="437.5" y="402.5" width="3.0" height="3.0" rx="0.8"/>
<rect x="380.5" y="413.5" width="3.0" height="4.0" rx="0.8"/><rect x="386.5" y="414.5" width="3.0" height="4.0" rx="0.8"/><rect x="394.5" y="415.5" width="3.0" height="4.0" rx="0.8"/>
<rect x="362.5" y="419.5" width="3.0" height="4.0" rx="0.8"/><rect x="358.5" y="436.5" width="4.0" height="3.0" rx="0.8"/><rect x="383.5" y="442.5" width="3.0" height="4.0" rx="0.8"/>
<rect x="400.5" y="435.5" width="4.0" height="3.0" rx="0.8"/><rect x="407.5" y="443.5" width="3.0" height="3.0" rx="0.8"/><rect x="424.5" y="430.5" width="3.0" height="3.0" rx="0.8"/>
<rect x="384.5" y="354.5" width="3.0" height="3.0" rx="0.8"/><rect x="391.5" y="470.5" width="4.0" height="3.0" rx="0.8"/><rect x="427.5" y="487.5" width="4.0" height="3.0" rx="0.8"/>
<rect x="447.5" y="481.5" width="3.0" height="3.0" rx="0.8"/><rect x="447.5" y="489.5" width="3.0" height="3.0" rx="0.8"/><rect x="492.5" y="482.5" width="3.0" height="3.0" rx="0.8"/>
<rect x="519.5" y="403.5" width="3.0" height="3.0" rx="0.8"/><rect x="533.5" y="409.5" width="3.0" height="3.0" rx="0.8"/><rect x="560.5" y="408.5" width="3.0" height="3.0" rx="0.8"/><rect x="590.5" y="404.5" width="3.0" height="3.0" rx="0.8"/>
<rect x="567.5" y="484.5" width="3.0" height="3.0" rx="0.8"/><rect x="568.5" y="484.5" width="3.0" height="3.0" rx="0.8"/>
<rect x="574.5" y="370.5" width="3.0" height="3.0" rx="0.8"/><rect x="594.5" y="363.5" width="3.0" height="3.0" rx="0.8"/><rect x="642.5" y="359.5" width="4.0" height="3.0" rx="0.8"/><rect x="644.5" y="372.5" width="4.0" height="3.0" rx="0.8"/>
<rect x="609.5" y="392.5" width="4.0" height="3.0" rx="0.8"/><rect x="698.5" y="387.5" width="4.0" height="3.0" rx="0.8"/><rect x="645.5" y="418.5" width="3.0" height="3.0" rx="0.8"/>
<rect x="670.5" y="414.5" width="4.0" height="3.0" rx="0.8"/><rect x="672.5" y="424.5" width="4.0" height="3.0" rx="0.8"/><rect x="713.5" y="395.5" width="5.0" height="4.0" rx="0.8"/><rect x="714.5" y="414.5" width="3.0" height="3.0" rx="0.8"/>
<rect x="642.5" y="445.5" width="6.0" height="4.0" rx="0.8"/><rect x="656.5" y="448.5" width="6.0" height="4.0" rx="0.8"/>
<rect x="568.5" y="484.5" width="3.0" height="3.0" rx="0.8"/><rect x="565.5" y="530.5" width="3.0" height="3.0" rx="0.8"/><rect x="573.5" y="533.5" width="3.0" height="3.0" rx="0.8"/><rect x="580.5" y="536.5" width="3.0" height="3.0" rx="0.8"/><rect x="586.5" y="540.5" width="3.0" height="3.0" rx="0.8"/>
<rect x="629.5" y="508.5" width="3.0" height="3.0" rx="0.8"/><rect x="620.5" y="546.5" width="3.0" height="3.0" rx="0.8"/><rect x="625.5" y="568.5" width="4.0" height="3.0" rx="0.8"/>
<rect x="641.5" y="559.5" width="4.0" height="3.0" rx="0.8"/><rect x="691.5" y="559.5" width="4.0" height="3.0" rx="0.8"/><rect x="700.5" y="528.5" width="4.0" height="3.0" rx="0.8"/><rect x="703.5" y="542.5" width="4.0" height="3.0" rx="0.8"/><rect x="690.5" y="560.5" width="4.0" height="3.0" rx="0.8"/>
<rect x="740.5" y="531.5" width="4.0" height="3.0" rx="0.8"/><rect x="741.5" y="511.5" width="4.0" height="3.0" rx="0.8"/><rect x="764.5" y="515.5" width="4.0" height="3.0" rx="0.8"/><rect x="761.5" y="530.5" width="4.0" height="3.0" rx="0.8"/>
<rect x="786.5" y="481.5" width="3.0" height="4.0" rx="0.8"/><rect x="798.5" y="489.5" width="4.0" height="4.0" rx="0.8"/><rect x="757.5" y="487.5" width="4.0" height="4.0" rx="0.8"/><rect x="731.5" y="470.5" width="4.0" height="3.0" rx="0.8"/>
<rect x="725.5" y="468.5" width="3.0" height="3.0" rx="0.8"/><rect x="741.5" y="469.5" width="3.0" height="3.0" rx="0.8"/><rect x="760.5" y="455.5" width="3.0" height="3.0" rx="0.8"/><rect x="777.5" y="466.5" width="3.0" height="3.0" rx="0.8"/>
</g>
</g>
<!--CARE-->
<!-- tree rows -->
<g font-size="9" fill="#b4371f" letter-spacing="0.3">
<rect x="213" y="270" width="79" height="12.5" fill="#f4a283"/><use href="#mp" x="215" y="270.5"/><use href="#mb" x="222.5" y="270.3"/><text x="237.5" y="280">Introduction</text>
<rect x="213" y="286" width="88.5" height="12.5" fill="#f4a283"/><use href="#mp" x="215" y="286.5"/><use href="#mb" x="222.5" y="286.3"/><text x="237.5" y="296">System Circuit</text>
<rect x="213" y="302" width="106" height="12.5" fill="#f4a283"/><use href="#mp" x="215" y="302.5"/><use href="#mb" x="222.5" y="302.3"/><text x="237.5" y="312">Location &amp; Routing</text>
<rect x="213" y="318" width="63" height="12.5" fill="#f4a283"/><use href="#mp" x="215" y="318.5"/><use href="#mb" x="222.5" y="318.3"/><text x="237.5" y="328">Fuse List</text>
<rect x="213" y="334" width="87.5" height="12.5" fill="#f4a283"/><use href="#mp" x="215" y="334.5"/><use href="#mb" x="222.5" y="334.3"/><text x="237.5" y="344">Connector List</text>
<rect x="213" y="350" width="81" height="12.5" fill="#f4a283"/><use href="#mp" x="215" y="350.5"/><use href="#mb" x="222.5" y="350.3"/><text x="237.5" y="360">Overall EWD</text>
</g>
<!-- label boxes -->
<rect x="353.5" y="247.5" width="22.5" height="18.5" rx="4" fill="#fff" fill-opacity="0.72"/>
<rect x="353.5" y="304" width="22.5" height="17" rx="4" fill="#fff" fill-opacity="0.66"/>
<rect x="353.5" y="334.5" width="22.5" height="17" rx="4" fill="#fff" fill-opacity="0.66"/>
<!-- leader lines -->
<path d="M291.5 276 L357 256" stroke="#111" stroke-width="2.6"/><path d="M291.5 276 L357 256" stroke="#fff" stroke-width="0.8"/>
<path d="M301.5 292.5 L357 284.5 M319 308 L357 313.5 M276 324.5 L356 343 M300.5 340 L357 373 M294 356 L357 403" stroke="#1a1a1a" stroke-width="1.1" fill="none"/>
<g font-size="12" fill="#2a2a2a"><text x="357.3" y="260">[A]</text><text x="357.3" y="288">[B]</text><text x="357.3" y="317">[C]</text><text x="357.3" y="347">[D]</text><text x="357.3" y="377">[E]</text><text x="357.3" y="407">[F]</text></g>
<!-- inner scrollbars -->
<rect x="932" y="268" width="14" height="344" fill="#f3f5f7"/>
<rect x="933.5" y="285.5" width="11" height="286" rx="2" fill="url(#gvs)" stroke="#a9a9b3" stroke-width="0.8"/>
<path d="M937 279.9 L939.4 276.6 L941.8 279.9Z M937 602.4 L939.4 605.6 L941.8 602.4Z" fill="#333"/>
<path d="M936.5 426 h5 M936.5 428 h5 M936.5 430 h5" stroke="#777" stroke-width="0.8"/>
<rect x="347.5" y="611" width="584" height="10" fill="#f3f5f7"/>
<rect x="359.5" y="611.8" width="557" height="8" rx="2" fill="url(#ghs)" stroke="#a9a9b3" stroke-width="0.8"/>
<path d="M354 613.5 L351 616 L354 618.5Z M924 613.5 L927 616 L924 618.5Z" fill="#333"/>
<path d="M635.5 613.5 v5 M637.5 613.5 v5 M639.5 613.5 v5" stroke="#777" stroke-width="0.8"/>
</svg>
<!-- /IMG -->
<div class="abs" style="left:0;top:759px;width:1408px;height:2px;background:#fff"></div>
</div>
</body>
</html>
